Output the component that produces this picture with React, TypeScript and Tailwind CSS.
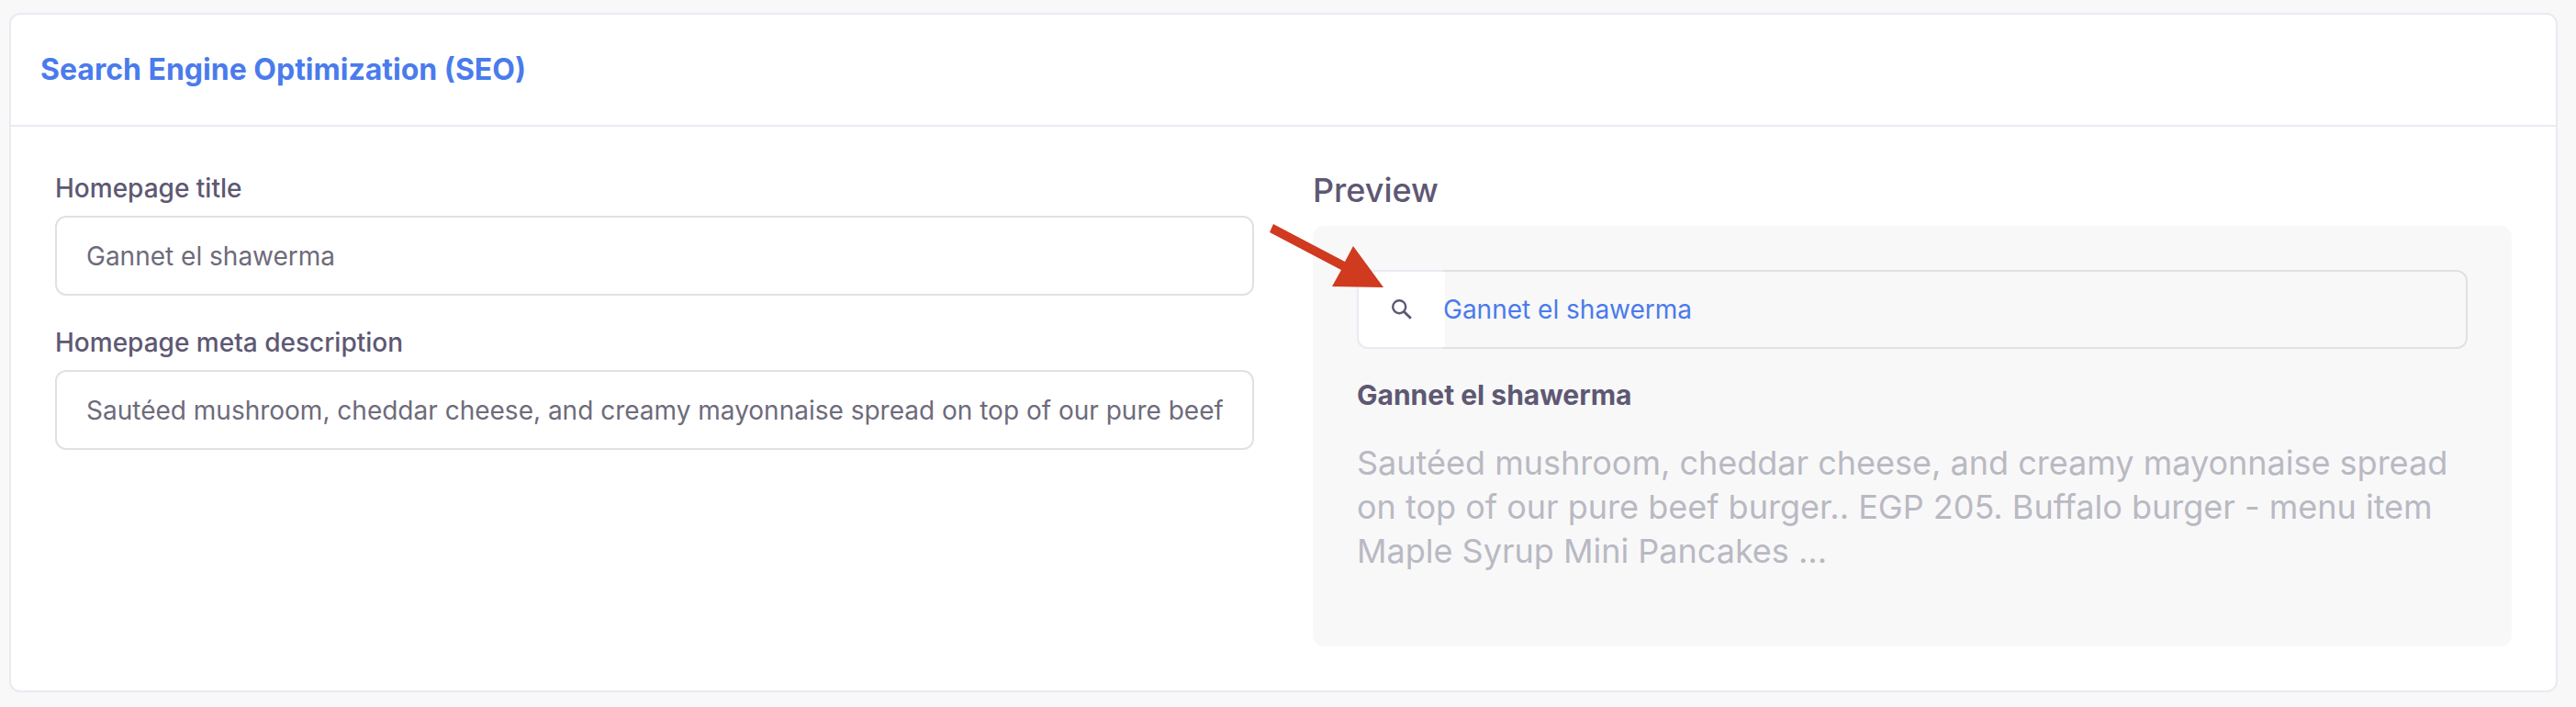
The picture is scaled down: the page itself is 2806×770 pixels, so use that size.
import { useState } from "react";

interface TextFieldProps {
  id: string;
  label: string;
  value: string;
  onChange: (value: string) => void;
}

function TextField({ id, label, value, onChange }: TextFieldProps) {
  return (
    <div>
      <label htmlFor={id} className="block mb-2.5 text-[28px] leading-[39px] font-medium text-[#5e5873]">
        {label}
      </label>
      <input
        id={id}
        type="text"
        value={value}
        onChange={(e) => onChange(e.target.value)}
        className="block w-full h-[87px] px-8 rounded-xl border-2 border-[#dee2e6] bg-white text-[28px] text-[#6e6b7b] outline-none"
      />
    </div>
  );
}

function SearchIcon() {
  return (
    <svg viewBox="0 0 22 22" className="w-[22px] h-[22px]" fill="none" stroke="#5e5873" aria-hidden="true">
      <circle cx="8.2" cy="8.2" r="7" strokeWidth="2.4" />
      <path d="M13.2 13.2l7.6 7.6" strokeWidth="2.9" />
    </svg>
  );
}

function Arrow() {
  return (
    <svg viewBox="0 0 126 70" className="absolute -left-12 -top-0.5 w-[126px] h-[70px]" aria-hidden="true">
      <path d="M5 0L83 41L92 24L125 69L69 68L79 50L1 9Z" fill="#d03a1f" />
    </svg>
  );
}

export default function App() {
  const [title, setTitle] = useState("Gannet el shawerma");
  const [description, setDescription] = useState(
    "Sautéed mushroom, cheddar cheese, and creamy mayonnaise spread on top of our pure beef burger.. EGP 205. Buffalo burger - menu item Maple Syrup Mini Pancakes ..."
  );

  return (
    <main className="min-h-screen bg-[#f8f8f8] pl-2.5 pr-5 pt-3.5 pb-4 font-['Inter',sans-serif]">
      <section className="rounded-xl border-2 border-[#ebe9f1] bg-white">

        {/* Header */}

        <header className="px-8 py-9 border-b-2 border-[#ebe9f1]">
          <h2 className="text-[32px] leading-[48px] font-bold text-[#4a7bec]">
            Search Engine Optimization (SEO)
          </h2>
        </header>

        <div className="grid grid-cols-2 gap-16 p-12">

          {/* Fields */}

          <div className="space-y-8">
            <TextField id="homepage-title" label="Homepage title" value={title} onChange={setTitle} />
            <TextField
              id="homepage-description"
              label="Homepage meta description"
              value={description}
              onChange={setDescription}
            />
          </div>

          {/* Preview */}

          <div>
            <h3 className="mb-[18px] text-4xl leading-[42px] font-medium text-[#5e5873]">Preview</h3>

            <div className="relative rounded-xl bg-[#f8f8f8] px-12 pt-12 pb-20">
              <div className="flex h-[86px]">
                <span className="w-24 shrink-0 flex items-center justify-center rounded-l-xl border-2 border-r-0 border-[#ebe9f1] bg-white">
                  <SearchIcon />
                </span>
                <input
                  type="text"
                  aria-label="Search preview"
                  value={title}
                  readOnly
                  className="relative -ml-0.5 min-w-0 flex-1 rounded-r-xl border-2 border-l-0 border-[#dee2e6] bg-transparent text-[28px] text-[#4a7bec] outline-none"
                />
              </div>

              <p className="my-7 text-[30px] leading-[44px] font-bold text-[#5e5873]">{title}</p>

              <p className="text-4xl leading-[48px] text-[#b9b9c3]">{description}</p>

              <Arrow />
            </div>
          </div>
        </div>
      </section>
    </main>
  );
}
